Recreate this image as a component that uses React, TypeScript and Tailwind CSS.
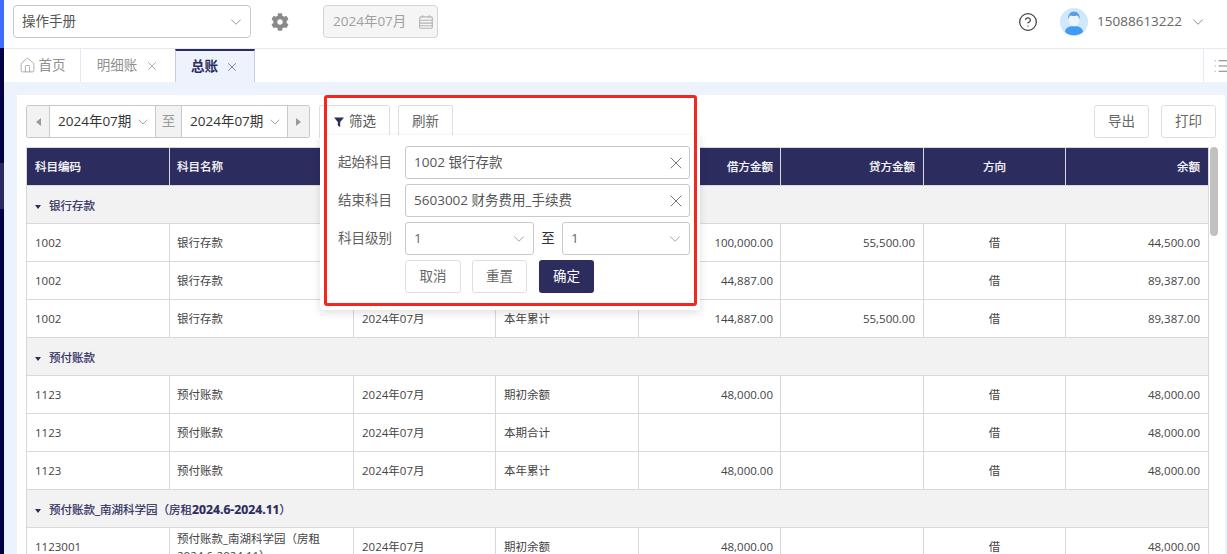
import { ChevronDown, CircleHelp, Home, List, X } from "lucide-react";
import { FaCog } from "react-icons/fa";

const font = { fontFamily: '"Open Sans", "Noto Sans CJK SC", sans-serif' };

type Row = { code: string; name: string; summary: string; debit: string; credit: string; balance: string };
type Group = { title: string; range?: string; rows: Row[] };

const groups: Group[] = [
  {
    title: "银行存款",
    rows: [
      { code: "1002", name: "银行存款", summary: "期初余额", debit: "100,000.00", credit: "55,500.00", balance: "44,500.00" },
      { code: "1002", name: "银行存款", summary: "本期合计", debit: "44,887.00", credit: "", balance: "89,387.00" },
      { code: "1002", name: "银行存款", summary: "本年累计", debit: "144,887.00", credit: "55,500.00", balance: "89,387.00" },
    ],
  },
  {
    title: "预付账款",
    rows: [
      { code: "1123", name: "预付账款", summary: "期初余额", debit: "48,000.00", credit: "", balance: "48,000.00" },
      { code: "1123", name: "预付账款", summary: "本期合计", debit: "", credit: "", balance: "48,000.00" },
      { code: "1123", name: "预付账款", summary: "本年累计", debit: "48,000.00", credit: "", balance: "48,000.00" },
    ],
  },
  {
    title: "预付账款_南湖科学园（房租",
    range: "2024.6-2024.11",
    rows: [
      { code: "1123001", name: "预付账款_南湖科学园（房租2024.6-2024.11）", summary: "期初余额", debit: "48,000.00", credit: "", balance: "48,000.00" },
    ],
  },
];

const headers = ["科目编码", "科目名称", "期间", "摘要", "借方金额", "贷方金额", "方向", "余额"];
const headerAlign = [
  "text-left px-[8px]",
  "text-left pl-[7px] pr-[8px]",
  "text-left px-[8px]",
  "text-left px-[8px]",
  "text-right pl-[8px] pr-[7px]",
  "text-right px-[8px]",
  "text-center px-[8px]",
  "text-right px-[8px]",
];

function Calendar() {
  return (
    <svg width="16" height="16" viewBox="0 0 14 14" fill="none" stroke="#b4b4b4" strokeWidth="1">
      <rect x="1.5" y="2.5" width="11" height="10" rx="1" />
      <path d="M1.5 5.5h11M1.5 8h11M1.5 10.3h11M4 1v2M10 1v2" />
    </svg>
  );
}

function Avatar() {
  return (
    <svg width="28" height="28" viewBox="0 0 28 28">
      <circle cx="14" cy="14" r="14" fill="#cfe9fb" />
      <path d="M5 24c0-4 4-6 9-6s9 2 9 6a14 14 0 0 1-18 0z" fill="#3f9cf2" />
      <ellipse cx="14" cy="12" rx="5.400" ry="6.500" fill="#eef4fb" />
      <path d="M8.400 11.500c-.8-5 2-8 5.600-8s6.400 3 5.600 8c-.6-2.400-1.600-3.600-2.600-4-2 .8-4.500.8-6.200 0-1 .6-2 2-2.400 4z" fill="#5a9fe0" />
    </svg>
  );
}

function Popover() {
  return (
    <div className="absolute left-[320px] top-[135px] z-10 h-[175px] w-[380px] bg-white shadow-[0_3px_8px_rgba(0,0,0,0.12)]">
      <div className="ml-[18px] mt-[11px] flex flex-col gap-[5px] text-[13.5px] text-[#5f5f5f]">
        <Field label="起始科目" value="1002 银行存款" />
        <Field label="结束科目" value="5603002 财务费用_手续费" />
        <div className="flex items-center">
          <span className="w-[67px]">科目级别</span>
          <LevelSelect width="w-[129px]" />
          <span className="w-[28px] text-center text-[#333]">至</span>
          <LevelSelect width="w-[128px]" />
        </div>
        <div className="ml-[67px] flex">
          <button className="h-[33px] w-[56px] rounded-[3px] border border-[#dcdfe6] bg-white text-[#666]">取消</button>
          <button className="ml-[11px] h-[33px] w-[55px] rounded-[3px] border border-[#dcdfe6] bg-white text-[#666]">重置</button>
          <button className="ml-[12px] h-[33px] w-[55px] rounded-[3px] bg-[#2d2c5f] text-white">确定</button>
        </div>
      </div>
    </div>
  );
}

function Field({ label, value }: { label: string; value: string }) {
  return (
    <div className="flex items-center">
      <span className="w-[67px]">{label}</span>
      <div className="flex h-[33px] w-[285px] items-center justify-between rounded-[3px] border border-[#c9c9c9] pl-[8px] pr-[3px] text-[#555]">
        <span>{value}</span>
        <X size={20} strokeWidth={1.200} className="text-[#777]" />
      </div>
    </div>
  );
}

function LevelSelect({ width }: { width: string }) {
  return (
    <div className={`flex h-[33px] items-center justify-between rounded-[3px] border border-[#c9c9c9] pl-[8px] pr-[5px] text-[#666] ${width}`}>
      <span>1</span>
      <ChevronDown size={18} strokeWidth={1} className="text-[#888]" />
    </div>
  );
}

function PeriodSelect() {
  return (
    <div className="flex h-full w-[105px] items-center justify-between pl-[8px] pr-[4px] text-[13.5px] text-[#333]">
      <span>2024年07期</span>
      <ChevronDown size={16} strokeWidth={1} className="text-[#777]" />
    </div>
  );
}

export default function App() {
  return (
    <div className="relative flex h-[554px] w-[1227px] overflow-hidden bg-white" style={font}>
      <div className="flex w-[4px] shrink-0 flex-col bg-[#020046]">
        <div className="h-[48px] bg-[#3f6bff]" />
        <div className="mt-[115px] h-[46px] bg-[#2a2960]" />
      </div>

      <div className="flex min-w-0 flex-1 flex-col">
        {/* top bar */}
        <div className="flex h-[49px] shrink-0 items-center border-b border-[#e6e8f2] pb-[5px] pl-[9px] pr-[20px]">
          <div className="flex h-[33px] w-[238px] items-center justify-between rounded-[4px] border border-[#c9c9c9] pl-[8px] pr-[5px] text-[13.5px] text-[#555]">
            <span>操作手册</span>
            <ChevronDown size={18} strokeWidth={1} className="text-[#777]" />
          </div>
          <FaCog size={18} className="ml-[20px] text-[#8a8a8a]" />
          <div className="ml-[34px] flex h-[33px] w-[115px] items-center justify-between rounded-[4px] border border-[#d5d5d5] bg-[#f5f5f5] pl-[9px] pr-[3px] text-[13.5px] text-[#a0a0a0]">
            <span>2024年07月</span>
            <Calendar />
          </div>
          <CircleHelp size={20} strokeWidth={1.500} className="ml-auto text-[#444]" />
          <div className="ml-[22px]">
            <Avatar />
          </div>
          <span className="ml-[9px] text-[13.5px] text-[#666]">15088613222</span>
          <ChevronDown size={18} strokeWidth={1} className="ml-[7px] text-[#666]" />
        </div>

        {/* tabs */}
        <div className="flex h-[33px] shrink-0 text-[13.5px] text-[#8f8f8f]">
          <div className="flex w-[77px] items-center justify-center gap-[3px] border-r border-[#e6e8f2]">
            <Home size={17} strokeWidth={1} />
            <span>首页</span>
          </div>
          <div className="flex w-[94px] items-center justify-center gap-[8px]">
            <span>明细账</span>
            <X size={14} strokeWidth={1.200} />
          </div>
          <div className="flex w-[80px] items-center justify-center gap-[7px] border-x border-[#c9cbdc] border-t-2 border-t-[#2d2c5f] bg-[#edf3fd] font-semibold text-[#2d2c5f]">
            <span>总账</span>
            <X size={14} strokeWidth={1.200} className="text-[#555]" />
          </div>
          <div className="ml-auto flex w-[24px] items-center overflow-hidden border-l border-[#e6e8f2] pl-[9px] text-[#555]">
            <List size={18} strokeWidth={1} className="shrink-0" />
          </div>
        </div>

        {/* body */}
        <div className="min-h-0 flex-1 bg-[#edf3fd] pl-[13px] pr-[2px] pt-[13px]">
          <div className="h-full bg-white pl-[9px] pt-[10px]">
            <div className="flex h-[33px] items-start pr-[9px]">
              <div className="flex h-[33px] items-center rounded-[2px] border border-[#c9c9c9]">
                <div className="flex h-full w-[23px] items-center justify-center border-r border-[#c9c9c9] bg-[#f2f2f2]">
                  <span className="h-0 w-0 border-y-[4px] border-r-[5px] border-y-transparent border-r-[#999]" />
                </div>
                <PeriodSelect />
                <div className="flex h-full w-[27px] items-center justify-center border-x border-[#c9c9c9] bg-[#f2f2f2] text-[13.5px] text-[#999]">至</div>
                <PeriodSelect />
                <div className="flex h-full w-[22px] items-center justify-center border-l border-[#c9c9c9] bg-[#f2f2f2]">
                  <span className="h-0 w-0 border-y-[4px] border-l-[5px] border-y-transparent border-l-[#999]" />
                </div>
              </div>
              <div className="ml-[9px] flex h-[33px] w-[71px] items-center gap-[5px] rounded-t-[2px] border border-[#dcdfe6] pl-[14px] text-[13.5px] text-[#555]">
                <svg width="10" height="10" viewBox="0 0 10 10">
                  <path d="M0 .5h10L6.200 5v5L3.800 8.500V5z" fill="#2d2c5f" />
                </svg>
                <span>筛选</span>
              </div>
              <div className="ml-[8px] flex h-[33px] w-[55px] items-center justify-center rounded-t-[2px] border border-[#dcdfe6] text-[13.5px] text-[#666]">刷新</div>
              <button className="ml-auto h-[33px] w-[55px] rounded-[3px] border border-[#dcdfe6] text-[13.5px] text-[#666]">导出</button>
              <button className="ml-[12px] h-[33px] w-[55px] rounded-[3px] border border-[#dcdfe6] text-[13.5px] text-[#666]">打印</button>
            </div>

            <div className="mt-[9px] flex items-start">
              <table className="w-[1182px] table-fixed border-collapse text-[11.5px] text-[#444]">
                <colgroup>
                  <col className="w-[143px]" />
                  <col className="w-[184px]" />
                  <col className="w-[142px]" />
                  <col className="w-[143px]" />
                  <col className="w-[142px]" />
                  <col className="w-[143px]" />
                  <col className="w-[142px]" />
                  <col className="w-[143px]" />
                </colgroup>
                <thead>
                  <tr className="h-[38px] bg-[#2d2c5f] text-white">
                    {headers.map((h, i) => (
                      <th key={h} className={`border border-[#d9d9d9] font-normal [-webkit-text-stroke:0.25px] ${headerAlign[i]}`}>
                        {h}
                      </th>
                    ))}
                  </tr>
                </thead>
                <tbody>
                  {groups.map((g) => (
                    <GroupRows key={g.title} group={g} />
                  ))}
                </tbody>
              </table>
              <div className="ml-[1px] h-[89px] w-[8px] shrink-0 rounded-[4px] bg-[#c1c1c1]" />
            </div>
          </div>
        </div>
      </div>

      <Popover />
      <div className="pointer-events-none absolute left-[324px] top-[95px] z-20 h-[211px] w-[373px] rounded-[3px] border-[3px] border-[#f5261e]" />
    </div>
  );
}

function GroupRows({ group }: { group: Group }) {
  return (
    <>
      <tr className="h-[38px] bg-[#f2f2f2]">
        <td colSpan={8} className="border border-[#d9d9d9] px-[8px] pt-[2px] text-[#2d2c5f] [-webkit-text-stroke:0.2px]">
          <span className="mr-[8px] inline-block h-0 w-0 border-x-[3.500px] border-t-[4px] border-x-transparent border-t-[#2d2c5f] align-middle" />
          {group.title}
          {group.range && (
            <>
              <b className="text-[12.2px] font-bold leading-none">{group.range}</b>）
            </>
          )}
        </td>
      </tr>
      {group.rows.map((r) => (
        <tr key={r.summary} className="h-[38px] bg-white">
          <td className="border border-[#d9d9d9] px-[8px]">{r.code}</td>
          <td className="border border-[#d9d9d9] pl-[7px] pr-[8px] leading-[17px]">{r.name}</td>
          <td className="border border-[#d9d9d9] px-[8px]">2024年07月</td>
          <td className="border border-[#d9d9d9] px-[8px]">{r.summary}</td>
          <td className="border border-[#d9d9d9] pl-[8px] pr-[7px] text-right">{r.debit}</td>
          <td className="border border-[#d9d9d9] px-[8px] text-right">{r.credit}</td>
          <td className="border border-[#d9d9d9] px-[8px] text-center">借</td>
          <td className="border border-[#d9d9d9] px-[8px] text-right">{r.balance}</td>
        </tr>
      ))}
    </>
  );
}
